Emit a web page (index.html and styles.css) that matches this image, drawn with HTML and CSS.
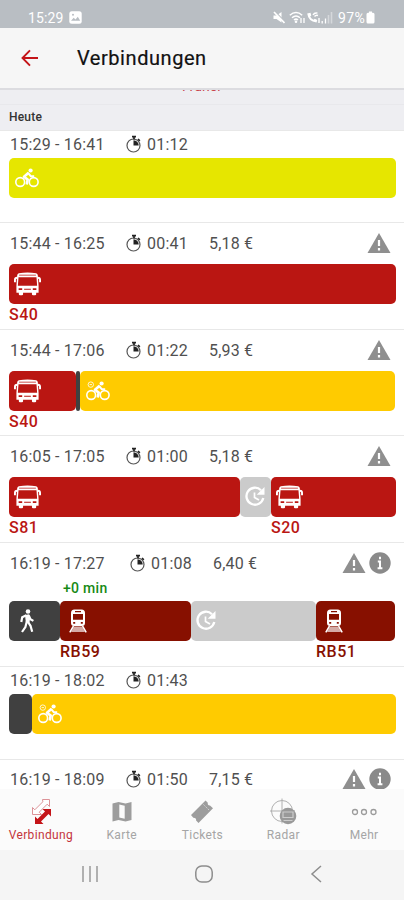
FILE: index.html
```html
<!DOCTYPE html>
<html lang="de">
<head>
    <meta charset="UTF-8">
    <meta name="viewport" content="width=device-width, initial-scale=1.0">
    <title>Verbindungen</title>
    <link rel="stylesheet" href="styles.css">
</head>
<body>

    <!-- Shared icons -->
    <svg class="sprite">
        <symbol id="timer" viewBox="0 0 16 18">
            <circle cx="7.5" cy="10.5" r="6.5" fill="none" stroke="#555" stroke-width="1.2"/>
            <path d="M7.5 10.5V5.2a5.3 5.3 0 0 1 5.2 5.3z" fill="#222"/>
            <path d="M6 1.7h4M8 2v2.5M12 4l1.8 1.8" fill="none" stroke="#222" stroke-width="1.7"/>
        </symbol>
        <symbol id="warning" viewBox="0 0 24 22">
            <path d="M12 1L23.5 21H.5z" fill="#8f8f8f"/>
            <path d="M12 8v6M12 16v2.4" stroke="#fff" stroke-width="2.2"/>
        </symbol>
        <symbol id="info" viewBox="0 0 22 22">
            <circle cx="11" cy="11" r="10.7" fill="#8a8a8a"/>
            <path d="M11 4.7v2.500M8.800 9.500H11v6.300M8.600 16.200h4.800" fill="none" stroke="#fff" stroke-width="2"/>
        </symbol>
        <symbol id="bus" viewBox="0 0 28 24">
            <path fill="#fff" fill-rule="evenodd" d="M5 .8Q14-.4 23 .8q1.500.3 1.700 2L25.500 14v7H23v1.500q0 1.200-1.200 1.200h-2q-1.200 0-1.200-1.200V21H9.400v1.500q0 1.200-1.200 1.200h-2Q5 23.700 5 22.500V21H2.500v-7l.8-11.200Q3.500 1.100 5 .8zM5.300 2.300v1h17.400v-1zM4.700 5L4 13.700h20L23.300 5zM4.800 16.500v1.700h3.700v-1.700zM10.500 17v1h7v-1zM19.500 16.500v1.700h3.700v-1.700z"/>
            <path d="M3.200 5.500Q1 5.600 1 7.500v2.700M24.800 5.500q2.200.1 2.200 2v2.700" fill="none" stroke="#fff" stroke-width="2"/>
        </symbol>
        <symbol id="bike" viewBox="0 0 24 20">
            <g fill="none" stroke="#fff">
                <circle cx="5.200" cy="14" r="4.400" stroke-width="1.600"/>
                <circle cx="18.700" cy="14" r="4.400" stroke-width="1.600"/>
                <path d="M13.600 4.800L9 8.800l3.700 2.800-1 4.800" stroke-width="2.600" stroke-linejoin="round"/>
                <path d="M13 4.800l2.800 3.400h3.400" stroke-width="1.900"/>
            </g>
            <circle cx="15.600" cy="2.500" r="2.100" fill="#fff"/>
        </symbol>
        <symbol id="sharedbike" viewBox="0 0 24 20">
            <use href="#bike" width="24" height="20"/>
            <circle cx="4.800" cy="3.600" r="2.700" fill="none" stroke="#fff" stroke-width="1" opacity=".8"/>
            <path d="M3.600 3.600h2.400" stroke="#fff" opacity=".8"/>
        </symbol>
        <symbol id="walk" viewBox="0 0 14 24">
            <circle cx="8" cy="2.500" r="2.300" fill="#fff"/>
            <path d="M5 6L9.200 5.300l.9 4.200-.7 4.400-3.600-.8z" fill="#fff"/>
            <path d="M6.300 6.300L2.200 8.200 1.300 13M8.800 6.500l1.600 3.700 3 1.700M6.800 12.500L5.400 18 2 23M8 13l2.500 3.800 1.700 6" fill="none" stroke="#fff" stroke-width="2.200"/>
        </symbol>
        <symbol id="train" viewBox="0 0 18 24">
            <path fill="#fff" fill-rule="evenodd" d="M5.500.6h7Q16 .8 16 4v10q0 3-3 3H5q-3 0-3-3V4Q2 .8 5.500.6zM6 2v1.300h6V2zM4 5v5.800h10V5zM4.200 13v1.800h2V13zM11.800 13v1.800h2V13z"/>
            <path d="M4.500 17L.8 23.300M13.500 17l3.700 6.300" stroke="#fff" stroke-width="1.500"/>
            <path d="M5 17.500h8l3 5.500H2z" fill="#fff" opacity=".65"/>
        </symbol>
        <symbol id="wait" viewBox="0 0 22 22">
            <path d="M17 4.200A8.500 8.500 0 1 0 19.300 12" fill="none" stroke="#fff" stroke-width="2.300"/>
            <path d="M20.500 1v7.800h-7.800z" fill="#fff"/>
            <path d="M10.500 6.500v5l4.500 2.600" fill="none" stroke="#fff" stroke-width="1.700"/>
        </symbol>
    </svg>

    <div class="statusbar">
        <span class="clock">15:29</span>
        <svg class="picture" width="13" height="13" viewBox="0 0 13 13">
            <rect x=".3" y=".3" width="12.400" height="12.400" rx="2.500" fill="#fff"/>
            <path d="M2 9.800l2.700-3 1.800 1.600 2.300-2.600 2.400 4z" fill="#b9bec3"/>
            <circle cx="4" cy="3.800" r="1" fill="#b9bec3"/>
        </svg>
        <div class="signals">
            <svg width="12" height="13" viewBox="0 0 12 13">
                <path d="M.5 4.500h3L8.500 1v10.500l-5-3.500h-3z" fill="#fff"/>
                <path d="M2 .5l10 10.500" stroke="#b9bec3" stroke-width="1.500"/>
                <path d="M1 1L11.500 12" stroke="#fff" stroke-width="1.700"/>
            </svg>
            <svg class="wifi" width="17" height="13" viewBox="0 0 17 13">
                <g fill="none" stroke="#fff" stroke-width="1.500">
                    <path d="M.8 4.200q6.200-5.400 12.400 0M3 6.800q4-3.500 8 0M5 9q2-1.700 4 0"/>
                    <path d="M12 7v5M15 12V7" stroke-width="1.300"/>
                </g>
                <circle cx="7" cy="10.800" r="1.300" fill="#fff"/>
            </svg>
            <svg width="14" height="13" viewBox="0 0 14 13">
                <path d="M1.200 2.500q1 8 9.300 9l.8-2.500-2.500-1.200-1.300 1Q4.700 7.300 4.200 5.500l1.100-1-.8-2.800z" fill="#fff"/>
                <path d="M7 4q1.500-2.700 4.500-1.800M8.500 5.500Q10 3.700 12 4.500M13 7v5" fill="none" stroke="#fff" stroke-width="1.400"/>
            </svg>
            <svg class="bars" width="12" height="13" viewBox="0 0 12 13">
                <path d="M1.200 10v2.500M4.500 7.500v5" stroke="#fff" stroke-width="1.300"/>
                <path d="M7.500 4v8.500M10.500 1v11.500" stroke="#fff" stroke-width="1.600" opacity=".4"/>
            </svg>
            <span class="percent">97%</span>
            <svg width="9" height="13" viewBox="0 0 9 13">
                <path d="M3 .5h3v1.300h1q1.500 0 1.500 1.500V11q0 1.500-1.500 1.500H2Q.5 12.500.5 11V3.300Q.5 1.800 2 1.800h1z" fill="#fff"/>
            </svg>
        </div>
    </div>

    <header class="appbar">
        <svg width="18" height="18" viewBox="0 0 18 18">
            <path d="M17 9H2M9 1.300L1.500 9 9 16.700" fill="none" stroke="#c41418" stroke-width="1.900"/>
        </svg>
        <h1>Verbindungen</h1>
    </header>

    <!-- scrolled up under the title bar -->
    <div class="earlier"><span>Früher</span></div>
    <div class="day">Heute</div>

    <main class="results">
        <section class="trip compact">
            <div class="summary">
                <span class="time">15:29 - 16:41</span>
                <svg class="timer"><use href="#timer"/></svg>
                <span class="duration">01:12</span>
            </div>
            <div class="legs">
                <div class="leg" style="width: 387px"><div class="bar lime"><svg class="bike"><use href="#bike"/></svg></div></div>
            </div>
        </section>

        <section class="trip">
            <div class="summary">
                <span class="time">15:44 - 16:25</span>
                <svg class="timer"><use href="#timer"/></svg>
                <span class="duration">00:41</span>
                <span class="price">5,18 €</span>
                <div class="notes"><svg class="warning"><use href="#warning"/></svg></div>
            </div>
            <div class="legs">
                <div class="leg" style="width: 387px"><div class="bar red"><svg class="bus"><use href="#bus"/></svg></div><span class="line">S40</span></div>
            </div>
        </section>

        <section class="trip short">
            <div class="summary">
                <span class="time">15:44 - 17:06</span>
                <svg class="timer"><use href="#timer"/></svg>
                <span class="duration">01:22</span>
                <span class="price">5,93 €</span>
                <div class="notes"><svg class="warning"><use href="#warning"/></svg></div>
            </div>
            <div class="legs">
                <div class="leg" style="width: 67px"><div class="bar red"><svg class="bus"><use href="#bus"/></svg></div><span class="line">S40</span></div>
                <div class="leg" style="width: 4px"><div class="bar dark thin"></div></div>
                <div class="leg" style="width: 315px"><div class="bar yellow"><svg class="bike"><use href="#sharedbike"/></svg></div></div>
            </div>
        </section>

        <section class="trip">
            <div class="summary">
                <span class="time">16:05 - 17:05</span>
                <svg class="timer"><use href="#timer"/></svg>
                <span class="duration">01:00</span>
                <span class="price">5,18 €</span>
                <div class="notes"><svg class="warning"><use href="#warning"/></svg></div>
            </div>
            <div class="legs">
                <div class="leg" style="width: 231px"><div class="bar red"><svg class="bus"><use href="#bus"/></svg></div><span class="line">S81</span></div>
                <div class="leg" style="width: 31px"><div class="bar grey"><svg class="wait"><use href="#wait"/></svg></div></div>
                <div class="leg" style="width: 125px"><div class="bar red"><svg class="bus"><use href="#bus"/></svg></div><span class="line">S20</span></div>
            </div>
        </section>

        <section class="trip delayed">
            <div class="summary">
                <span class="time">16:19 - 17:27</span>
                <svg class="timer"><use href="#timer"/></svg>
                <span class="duration">01:08</span>
                <span class="price">6,40 €</span>
                <div class="notes"><svg class="warning"><use href="#warning"/></svg><svg class="info"><use href="#info"/></svg></div>
            </div>
            <div class="delay">+0 min</div>
            <div class="legs">
                <div class="leg" style="width: 51px"><div class="bar dark"><svg class="walk"><use href="#walk"/></svg></div></div>
                <div class="leg" style="width: 131px"><div class="bar maroon"><svg class="train"><use href="#train"/></svg></div><span class="line regional">RB59</span></div>
                <div class="leg" style="width: 125px"><div class="bar grey"><svg class="wait"><use href="#wait"/></svg></div></div>
                <div class="leg" style="width: 79px"><div class="bar maroon"><svg class="train"><use href="#train"/></svg></div><span class="line regional">RB51</span></div>
            </div>
        </section>

        <section class="trip compact tall">
            <div class="summary">
                <span class="time">16:19 - 18:02</span>
                <svg class="timer"><use href="#timer"/></svg>
                <span class="duration">01:43</span>
            </div>
            <div class="legs">
                <div class="leg" style="width: 23px"><div class="bar dark"></div></div>
                <div class="leg" style="width: 364px"><div class="bar yellow"><svg class="bike"><use href="#sharedbike"/></svg></div></div>
            </div>
        </section>

        <section class="trip last">
            <div class="summary">
                <span class="time">16:19 - 18:09</span>
                <svg class="timer"><use href="#timer"/></svg>
                <span class="duration">01:50</span>
                <span class="price">7,15 €</span>
                <div class="notes"><svg class="warning"><use href="#warning"/></svg><svg class="info"><use href="#info"/></svg></div>
            </div>
        </section>
    </main>

    <nav class="tabs">
        <div class="tab active">
            <svg width="28" height="28" viewBox="0 0 28 28">
                <path d="M15.500 1.500h7v7l-2.300-2.300-8 8 2.300 2.300h-9v-7l2.300 2.300 8-8z" fill="#fff" stroke="#dc9398" stroke-width="1"/>
                <path d="M24 11v7.500l-2.500-2.500-7.500 7.500 2.500 2.500H8v-7.500l2.500 2.500 7.500-7.500-2.500-2.500z" fill="#c41418"/>
            </svg>
            <span>Verbindung</span>
        </div>
        <div class="tab">
            <svg width="28" height="28" viewBox="0 0 28 28">
                <path d="M4.500 5.500l6-1.500 7 1.500 6-1.500v18l-6 1.500-7-1.500-6 1.500z" fill="#9d9d9d"/>
                <path d="M11.300 6.500l5.400 1.200v13l-5.400-1.200z" fill="#fbfbfb"/>
            </svg>
            <span>Karte</span>
        </div>
        <div class="tab">
            <svg width="28" height="28" viewBox="0 0 28 28">
                <path d="M3 17L17.500 2.500l2.300 2.300q-.5 2.700 2.200 2.600l3 2.900L10.500 25l-2.400-2.400q.4-2.900-2.800-2.800z" fill="#9d9d9d"/>
                <path d="M15.500 6.500l6 6" stroke="#ddd" stroke-width="1" stroke-dasharray="1.500 1.500"/>
            </svg>
            <span>Tickets</span>
        </div>
        <div class="tab">
            <svg width="28" height="28" viewBox="0 0 28 28">
                <g fill="none" stroke="#b0b0b0" stroke-width="1">
                    <circle cx="13" cy="13" r="10.500"/>
                    <path d="M13 .5v25M1 13h25"/>
                </g>
                <circle cx="19" cy="18" r="8.300" fill="#999"/>
                <path d="M14 14h10v5.500H14zM14.500 22.500h9" fill="none" stroke="#ccc" stroke-width="1.200"/>
            </svg>
            <span>Radar</span>
        </div>
        <div class="tab">
            <svg width="28" height="28" viewBox="0 0 28 28">
                <g fill="none" stroke="#9b9b9b" stroke-width="1.300">
                    <circle cx="5" cy="14" r="2.500"/>
                    <circle cx="14" cy="14" r="2.500"/>
                    <circle cx="23.500" cy="14" r="2.500"/>
                </g>
            </svg>
            <span>Mehr</span>
        </div>
    </nav>

    <div class="system">
        <svg width="18" height="18" viewBox="0 0 18 18"><path d="M2 1v16M9 1v16M16 1v16" stroke="#999" stroke-width="1.500"/></svg>
        <svg width="20" height="18" viewBox="0 0 20 18"><rect x="1.800" y="1" width="16.400" height="16" rx="6" fill="none" stroke="#8d8d8d" stroke-width="1.500"/></svg>
        <svg width="18" height="18" viewBox="0 0 18 18"><path d="M13 1L4 9l9 8" fill="none" stroke="#8d8d8d" stroke-width="1.500"/></svg>
    </div>

</body>
</html>
```
FILE: styles.css
```css
* {
    box-sizing: border-box;
}
body {
    font-family: Roboto, "Liberation Sans", sans-serif;
    background-color: #fff;
    margin: 0;
    height: 900px;
    display: flex;
    flex-direction: column;
    overflow: hidden;
}
svg {
    display: block;
    flex: none;
}
.sprite {
    width: 0;
    height: 0;
    display: none;
}

/* Status bar */
.statusbar {
    height: 28px;
    padding: 7px 29px 0 28px;
    background-color: #b9bec3;
    color: #fff;
    display: flex;
    align-items: center;
    flex: none;
}
.clock {
    font-size: 14px;
    letter-spacing: 0.1px;
}
.picture {
    margin-left: 6px;
}
.signals {
    margin-left: auto;
    display: flex;
    align-items: center;
}
.wifi {
    margin-left: 4px;
}
.bars {
    margin-left: 1px;
}
.percent {
    font-size: 14px;
    letter-spacing: 0.3px;
    margin: 0 1px 0 5px;
}

/* Title */
.appbar {
    height: 60px;
    padding-left: 21px;
    background-color: #f6f6f6;
    display: flex;
    align-items: center;
    flex: none;
}
.appbar h1 {
    font-size: 20px;
    font-weight: 400;
    letter-spacing: 0.55px;
    color: #111;
    -webkit-text-stroke: 0.2px #111;
    margin: 0 0 0 38px;
}
.earlier {
    height: 17px;
    background-color: #eeeef2;
    border-top: 2px solid #dcdce0;
    border-bottom: 1px solid #e8e8ec;
    overflow: hidden;
    text-align: center;
    flex: none;
}
.earlier span {
    display: block;
    font-size: 14px;
    line-height: 14px;
    margin-top: -11px;
    color: #c8444b;
}
.day {
    height: 25px;
    padding-left: 9px;
    background-color: #eeeef2;
    color: #333;
    font-size: 12px;
    font-weight: 500;
    line-height: 24px;
    letter-spacing: 0.2px;
    flex: none;
}

/* Connections */
.results {
    height: 659px;
    overflow: hidden;
    flex: none;
}
.trip {
    height: 107px;
    padding: 10px 8px 0 9px;
    border-top: 1px solid #e8e8e8;
}
.trip.short {
    height: 106px;
}
.trip.compact {
    height: 92px;
    padding-top: 3px;
}
.trip.tall {
    height: 93px;
}
.trip.delayed {
    height: 124px;
}
.trip.last {
    padding-top: 9px;
}
.summary {
    height: 20px;
    display: flex;
    align-items: center;
    color: #505050;
    font-size: 16px;
    letter-spacing: 0.2px;
    white-space: nowrap;
}
.time {
    width: 117px;
    padding-left: 1px;
}
.delayed .time {
    width: 121px;
}
.timer {
    width: 16px;
    height: 18px;
}
.duration {
    width: 57px;
    margin-left: 5px;
}
.price {
    margin-left: 5px;
}
.notes {
    margin-left: auto;
    padding-right: 5px;
    display: flex;
    align-items: center;
    gap: 3px;
}
.warning {
    width: 24px;
    height: 22px;
}
.info {
    width: 22px;
    height: 22px;
}
.delay {
    height: 17px;
    margin: 6px 0 -6px 54px;
    color: #168a16;
    font-size: 14px;
    font-weight: 500;
    line-height: 18px;
    letter-spacing: 0.3px;
}
.legs {
    display: flex;
    margin-top: 11px;
}
.compact .legs {
    margin-top: 4px;
}
.bar {
    height: 40px;
    padding-left: 5px;
    border-radius: 5px;
    display: flex;
    align-items: center;
}
.bar.thin {
    padding: 0;
    border-radius: 2px;
}
.lime {
    background-color: #e6e600;
}
.red {
    background-color: #ba1612;
}
.maroon {
    background-color: #871000;
}
.yellow {
    background-color: #ffcb00;
}
.dark {
    background-color: #404040;
}
.grey {
    background-color: #cbcbcb;
}
.bus {
    width: 27px;
    height: 24px;
}
.bike {
    width: 24px;
    height: 20px;
    margin-left: 1px;
}
.walk {
    width: 14px;
    height: 24px;
    margin-left: 6px;
}
.train {
    width: 18px;
    height: 24px;
    margin-left: 4px;
}
.wait {
    width: 22px;
    height: 22px;
    margin-left: -1px;
}
.line {
    display: block;
    color: #ba1612;
    font-size: 16px;
    font-weight: 500;
    line-height: 21px;
    letter-spacing: 0.5px;
}
.regional {
    color: #871000;
}

/* Bottom navigation */
.tabs {
    height: 61px;
    background-color: #fbfbfb;
    display: flex;
    flex: none;
}
.tab {
    flex: 1;
    padding: 9px 0 0 1px;
    display: flex;
    flex-direction: column;
    align-items: center;
    color: #a5a5a5;
    font-size: 12px;
    line-height: 14px;
    letter-spacing: 0.35px;
}
.tab span {
    margin-top: 2px;
}
.tab.active {
    color: #c4343c;
}
.system {
    height: 50px;
    padding: 0 78px 2px 81px;
    background-color: #f5f5f5;
    display: flex;
    align-items: center;
    justify-content: space-between;
    flex: none;
}
```
